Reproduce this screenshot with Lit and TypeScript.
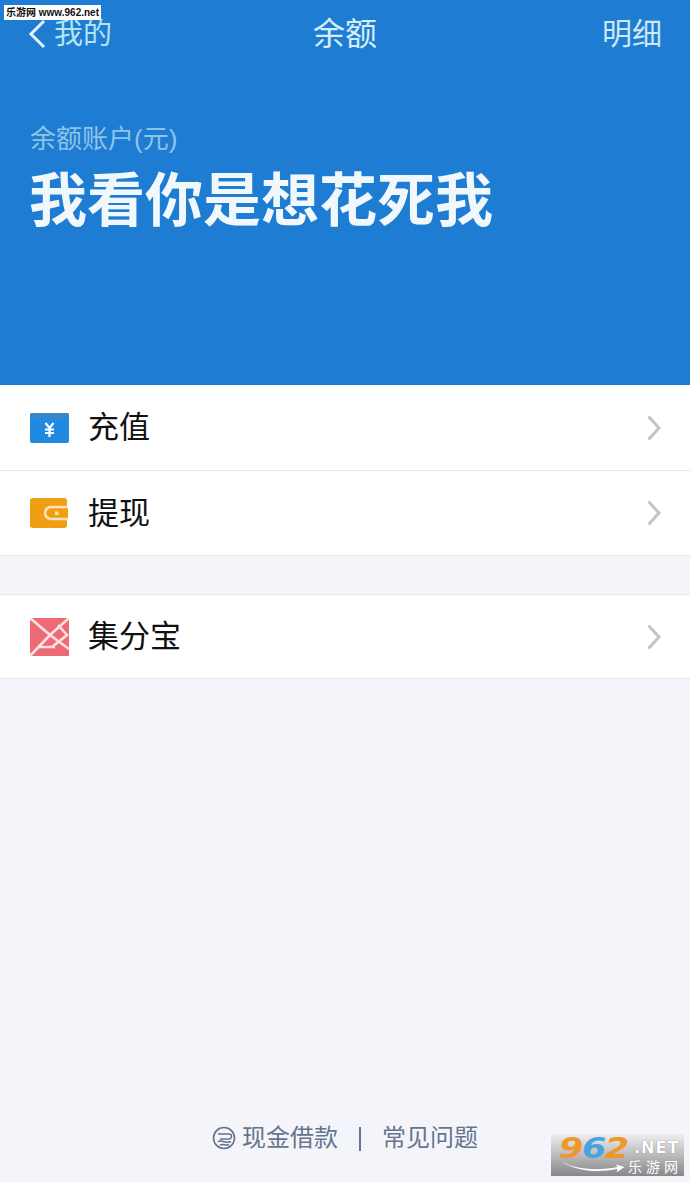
import { LitElement, html, css, svg } from "lit";
import { customElement } from "lit/decorators.js";

const chevron = html`<svg class="chev" width="16" height="28" viewBox="0 0 16 28">
  <path d="M2.5 2.5 L13 14 L2.5 25.5" fill="none" stroke="#c4c4c8" stroke-width="3" />
</svg>`;

const cardIcon = html`<svg width="40" height="30" viewBox="0 0 40 30">
  <rect x="0" y="0" width="39" height="30" rx="2" fill="#1f8ae0" />
  <path d="M0 2 a2 2 0 0 1 2 -2 h35 a2 2 0 0 1 2 2 v3 h-39 z" fill="#3a87c4" />
  <path d="M15.5 10 L19.5 15 L23.5 10 M19.5 15 V24 M15 16.5 H24 M15 20 H24" fill="none" stroke="#fff" stroke-width="2.2" />
</svg>`;

const walletIcon = html`<svg width="38" height="30" viewBox="0 0 38 30">
  <rect x="0" y="0" width="37" height="30" rx="3" fill="#f09e14" />
  <path d="M38 9 H21 a6 6 0 0 0 0 12 H38" fill="#f09e14" stroke="#fbe3b4" stroke-width="2.6" />
  <rect x="25" y="13.5" width="3.5" height="3.5" fill="#fbe3b4" />
</svg>`;

const pointsIcon = html`<svg width="39" height="38" viewBox="0 0 39 38">
  <rect width="39" height="38" fill="#ee6b75" />
  <path d="M0 0 L20 17 L39 0 M20 17 L39 31 M0 38 L20 17 M8 29 H25 M28 7 L37 17 L22 29" fill="none" stroke="#f9e3e3" stroke-width="2.6" />
</svg>`;

const loanIcon = svg`<circle cx="12" cy="12" r="10.5" fill="none" stroke="#63738c" stroke-width="1.6" />
  <path d="M6 8 H17 a2.5 2.5 0 0 1 0 5 H8 M6 15.5 C10 13.5 13 18 19 15.5 M8 19 C11 17.5 14 20 17 18.5" fill="none" stroke="#63738c" stroke-width="1.5" />`;

@customElement("app-root")
export class AppRoot extends LitElement {
  static styles = css`
    :host {
      display: block;
      position: relative;
      width: 690px;
      height: 1182px;
      overflow: hidden;
      background: #f4f5fb;
      font-family: "Liberation Sans", "Noto Sans CJK SC", sans-serif;
    }
    .page {
      display: flex;
      flex-direction: column;
      height: 100%;
    }
    .hero {
      height: 385px;
      box-sizing: border-box;
      background: #1e7dd2;
      color: #fff;
      padding: 15px 28px 0 28px;
    }
    .nav {
      display: grid;
      grid-template-columns: 1fr auto 1fr;
      align-items: center;
      height: 38px;
      font-size: 29px;
      line-height: 38px;
    }
    .back {
      display: flex;
      align-items: center;
      gap: 7px;
      color: #b5e3f2;
    }
    .nav .title {
      font-size: 32px;
      color: #d6eef8;
    }
    .nav .detail {
      justify-self: end;
      font-size: 30px;
      color: #cbe9f5;
    }
    .label {
      margin: 68px 0 0 2px;
      font-size: 26px;
      line-height: 36px;
      color: #8fc4e8;
    }
    .amount {
      margin: 7px 0 0 1px;
      font-size: 58px;
      line-height: 74px;
      font-weight: 700;
      color: #f0f8fc;
    }
    .group {
      background: #fff;
      border-bottom: 1px solid #e8e8ec;
    }
    .spaced {
      margin-top: 38px;
      border-top: 1px solid #e8e8ec;
    }
    .spaced .row {
      height: 83px;
    }
    .spaced .name {
      padding-top: 0;
    }
    .row {
      display: flex;
      align-items: center;
      height: 85px;
      padding: 0 28px 0 30px;
      box-sizing: border-box;
    }
    .row + .row {
      border-top: 1px solid #e8e8ec;
    }
    .icon {
      width: 40px;
      display: flex;
      align-items: center;
      margin-right: 18px;
    }
    .name {
      flex: 1;
      font-size: 31px;
      line-height: 40px;
      padding-top: 1px;
      color: #111;
    }
    .footer {
      margin-top: auto;
      height: 88px;
      display: flex;
      justify-content: center;
      align-items: flex-start;
      color: #66758d;
      font-size: 24px;
      line-height: 36px;
      padding: 26px 0 0 0;
      box-sizing: border-box;
    }
    .footer svg {
      margin: 6px 6px 0 0;
    }
    .sep {
      width: 2px;
      height: 24px;
      background: #66758d;
      margin: 7px 21px 0 21px;
    }
    .mark-top {
      position: absolute;
      left: 4px;
      top: 5px;
      width: 97px;
      height: 15px;
      background: #fff;
      color: #111;
      font-size: 10px;
      line-height: 15px;
      font-weight: 700;
      white-space: nowrap;
      text-align: center;
    }
    .mark-logo {
      position: absolute;
      left: 551px;
      top: 1134px;
      width: 133px;
      height: 42px;
      background: linear-gradient(#eeeeee, #888888);
    }
    .digits {
      position: absolute;
      left: 8px;
      top: 0;
      font-family: "DejaVu Sans", sans-serif;
      font-size: 29px;
      line-height: 29px;
      font-weight: 700;
      font-style: italic;
      letter-spacing: -1px;
      color: #f0972c;
      transform: scaleX(1.2);
      transform-origin: left center;
    }
    .digits b {
      color: #4aa3e0;
    }
    .swoosh {
      position: absolute;
      left: 6px;
      top: 26px;
    }
    .net {
      position: absolute;
      left: 83px;
      top: 4px;
      color: #fff;
      font-family: "DejaVu Sans", sans-serif;
      font-size: 16px;
      line-height: 20px;
      font-weight: 700;
      letter-spacing: 1px;
      text-shadow: 0 0 1px #667;
    }
    .cn {
      position: absolute;
      left: 77px;
      top: 25px;
      color: #fff;
      font-size: 14px;
      line-height: 16px;
      letter-spacing: 4px;
      white-space: nowrap;
    }
  `;

  render() {
    return html`
      <div class="page">
        <section class="hero">
          <div class="nav">
            <div class="back">
              <svg width="19" height="30" viewBox="0 0 19 30">
                <path d="M16 2 L3 15 L16 28" fill="none" stroke="#e4f2fa" stroke-width="3" />
              </svg>
              <span>我的</span>
            </div>
            <div class="title">余额</div>
            <div class="detail">明细</div>
          </div>
          <div class="label">余额账户(元)</div>
          <div class="amount">我看你是想花死我</div>
        </section>

        <div class="group">
          <div class="row">
            <div class="icon">${cardIcon}</div>
            <div class="name">充值</div>
            ${chevron}
          </div>
          <div class="row">
            <div class="icon">${walletIcon}</div>
            <div class="name">提现</div>
            ${chevron}
          </div>
        </div>

        <div class="group spaced">
          <div class="row">
            <div class="icon">${pointsIcon}</div>
            <div class="name">集分宝</div>
            ${chevron}
          </div>
        </div>

        <div class="footer">
          <svg width="24" height="24" viewBox="0 0 24 24">${loanIcon}</svg>
          <span>现金借款</span>
          <div class="sep"></div>
          <span>常见问题</span>
        </div>
      </div>

      <div class="mark-top">乐游网 www.962.net</div>
      <div class="mark-logo">
        <div class="digits">9<b>6</b>2</div>
        <svg class="swoosh" width="72" height="14" viewBox="0 0 72 16">
          <path d="M0 2 C20 12 45 12 64 8 L62 5 L72 8 L63 14 L64 10 C42 15 18 13 0 2 Z" fill="#fff" />
        </svg>
        <div class="net">.NET</div>
        <div class="cn">乐游网</div>
      </div>
    `;
  }
}
